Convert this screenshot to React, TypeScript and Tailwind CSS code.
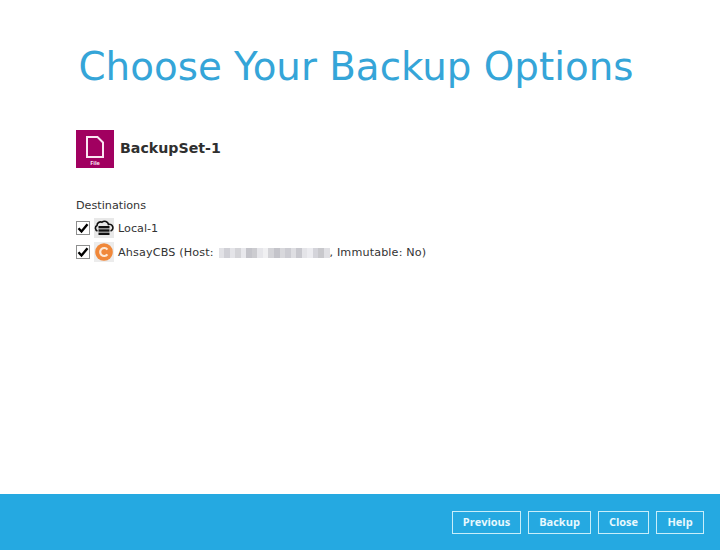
const blurCols = ['#e2e2e6', '#d0d0d6', '#e4e4e8', '#d4d4d8', '#e8e8ec', '#c4c4ca', '#ccccd0', '#e6e6ea', '#f0f0f2', '#d4d4d8', '#c4c4ca', '#d8d8dc', '#ccccd2', '#dedee2', '#c8c8ce', '#e4e4e8', '#ececf0', '#d4d4da', '#c8c8cc', '#e0e0e4']

function Check() {
  return (
    <span className="w-[14px] h-[14px] border border-[#8e8f8f] bg-white flex items-center justify-center flex-shrink-0">
      <svg width="12" height="12" viewBox="0 0 12 12">
        <path d="M1.5 6.2 L4.5 9.5 L10.5 2.2" fill="none" stroke="#000" strokeWidth="2.4" />
      </svg>
    </span>
  )
}

function FileIcon() {
  return (
    <div className="w-[38px] h-[38px] bg-[#a10060] flex flex-col items-center flex-shrink-0">
      <svg width="18" height="22" viewBox="0 0 18 22" className="mt-[6px]">
        <path d="M1 1 H11.5 L17 6.5 V21 H1 Z" fill="none" stroke="#fbe6f2" strokeWidth="2" />
      </svg>
      <span className="text-[5.5px] leading-[6px] mt-[2px] text-[#fbe6f2] font-bold font-['Open_Sans',sans-serif]">File</span>
    </div>
  )
}

function LocalIcon() {
  return (
    <div className="w-5 h-5 bg-[#e8e8e8] flex items-center justify-center flex-shrink-0">
      <svg width="20" height="20" viewBox="0 0 20 20">
        <path d="M3.5 13 A3 3 0 0 1 3 7.5 A3.6 3.6 0 0 1 8 4.2 A4 4 0 0 1 14.5 6.5 A3.3 3.3 0 0 1 16.5 13" fill="none" stroke="#111" strokeWidth="1.6" />
        <rect x="4.5" y="8" width="11" height="2.4" fill="#111" />
        <rect x="4.5" y="11.3" width="11" height="2.4" fill="#111" />
        <rect x="4.5" y="14.6" width="11" height="2.4" fill="#111" />
      </svg>
    </div>
  )
}

function CbsIcon() {
  return (
    <div className="w-5 h-5 bg-[#ececec] flex items-center justify-center flex-shrink-0">
      <svg width="18" height="18" viewBox="0 0 18 18">
        <circle cx="9" cy="9" r="8.8" fill="#f0883a" />
        <path d="M12.4 6.6 A4 4 0 1 0 12.4 11.4" fill="none" stroke="#fde8d6" strokeWidth="2.2" />
      </svg>
    </div>
  )
}

function FooterButton({ label, width }: { label: string; width: string }) {
  return (
    <button className={`${width} h-[23px] border border-[#c8eefa] text-[11px] font-bold text-[#e8f8fd] font-['Open_Sans',sans-serif] flex items-center justify-center`}>
      {label}
    </button>
  )
}

export default function App() {
  return (
    <div className="w-[720px] h-[550px] bg-white flex flex-col font-['DejaVu_Sans',Verdana,sans-serif] overflow-hidden">
      <div className="flex-1 flex flex-col min-h-0">
        <h1 className="text-center text-[38.8px] leading-[44px] font-normal text-[#35a5d8] mt-[45px] ml-[-8px]">
          Choose Your Backup Options
        </h1>

        <div className="flex items-center gap-[6px] ml-[76px] mt-[41px]">
          <FileIcon />
          <span className="text-[14.2px] font-bold text-[#2f2f2f]">BackupSet-1</span>
        </div>

        <div className="ml-[76px] mt-[31px] text-[11.2px] text-[#333]">
          <div className="leading-[14px]">Destinations</div>
          <div className="flex items-center mt-[5px] h-5">
            <Check />
            <span className="ml-[4px]"><LocalIcon /></span>
            <span className="ml-[4px] pt-[3px]">Local-1</span>
          </div>
          <div className="flex items-center mt-[4px] h-5">
            <Check />
            <span className="ml-[4px]"><CbsIcon /></span>
            <span className="ml-[4px] pt-[3px] tracking-[0.13px]">AhsayCBS (Host:</span>
            <div className="flex ml-[5px] mt-[2px] h-[10px] w-[111px] blur-[0.5px]">
              {blurCols.map((c, i) => (
                <span key={i} className="flex-1" style={{ backgroundColor: c }} />
              ))}
            </div>
            <span className="pt-[3px] tracking-[0.13px]">, Immutable: No)</span>
          </div>
        </div>
      </div>

      <div className="h-[56px] bg-[#25a9e1] flex items-center justify-end gap-[7px] pr-[16px] flex-shrink-0">
        <FooterButton label="Previous" width="w-[69px]" />
        <FooterButton label="Backup" width="w-[63px]" />
        <FooterButton label="Close" width="w-[51px]" />
        <FooterButton label="Help" width="w-[48px]" />
      </div>
    </div>
  )
}
